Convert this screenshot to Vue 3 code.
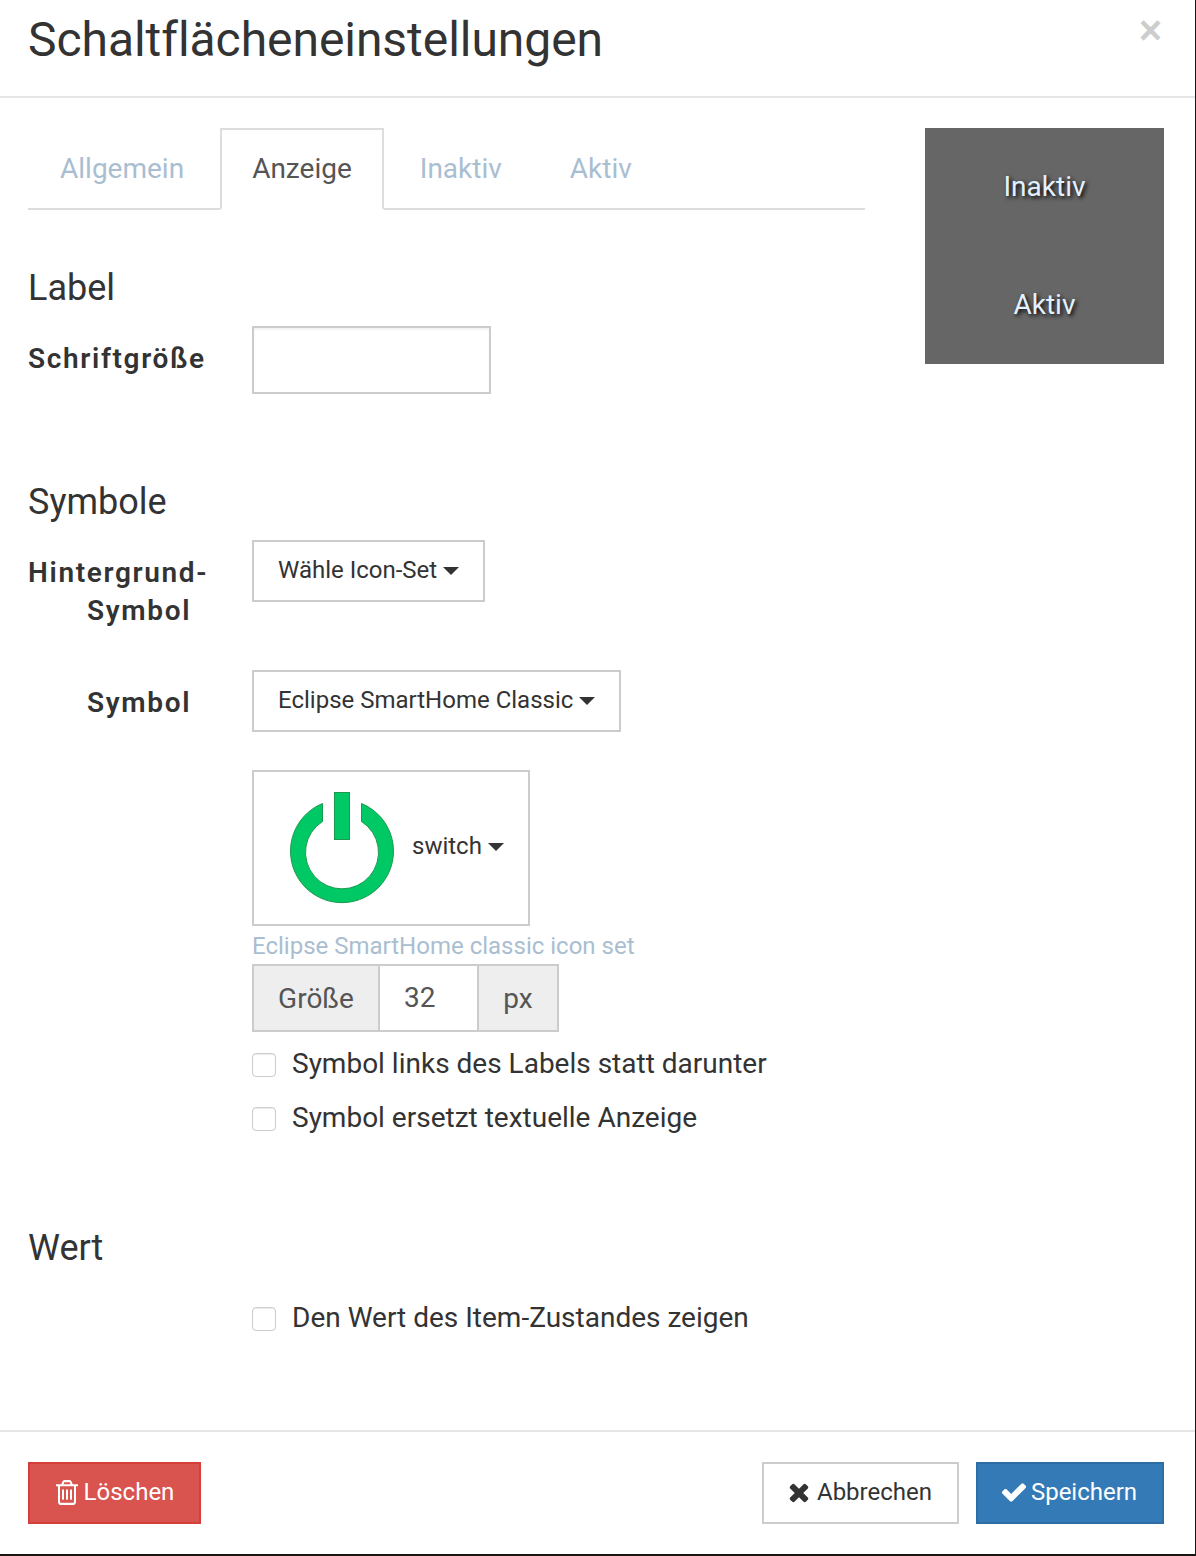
<script setup>
const tabs = [
  { label: 'Allgemein', active: false },
  { label: 'Anzeige', active: true },
  { label: 'Inaktiv', active: false },
  { label: 'Aktiv', active: false }
]
const trash = 'M704 736v576q0 14-9 23t-23 9h-64q-14 0-23-9t-9-23v-576q0-14 9-23t23-9h64q14 0 23 9t9 23zm256 0v576q0 14-9 23t-23 9h-64q-14 0-23-9t-9-23v-576q0-14 9-23t23-9h64q14 0 23 9t9 23zm256 0v576q0 14-9 23t-23 9h-64q-14 0-23-9t-9-23v-576q0-14 9-23t23-9h64q14 0 23 9t9 23zm128 724v-948h-896v948q0 22 7 40.5t14.5 27 10.5 8.5h832q3 0 10.5-8.5t14.5-27 7-40.5zm-672-1076h448l-48-117q-7-9-17-11h-317q-10 2-17 11zm928 32v64q0 14-9 23t-23 9h-96v948q0 83-47 143.5t-113 60.5h-832q-66 0-113-58.5t-47-141.5v-952h-96q-14 0-23-9t-9-23v-64q0-14 9-23t23-9h309l70-167q15-37 54-63t79-26h320q40 0 79 26t54 63l70 167h309q14 0 23 9t9 23z'
const times = 'M1490 1322q0 40-28 68l-136 136q-28 28-68 28t-68-28l-294-294-294 294q-28 28-68 28t-68-28l-136-136q-28-28-28-68t28-68l294-294-294-294q-28-28-28-68t28-68l136-136q28-28 68-28t68 28l294 294 294-294q28-28 68-28t68 28l136 136q28 28 28 68t-28 68l-294 294 294 294q28 28 28 68z'
const check = 'M1671 566q0 40-28 68l-724 724-136 136q-28 28-68 28t-68-28l-136-136-362-362q-28-28-28-68t28-68l136-136q28-28 68-28t68 28l294 295 656-657q28-28 68-28t68 28l136 136q28 28 28 68z'
</script>

<template>
  <div class="modal">
    <header class="head">
      <h1 class="title">Schaltflächeneinstellungen</h1>
      <span class="close">×</span>
    </header>

    <main class="body">
      <div class="left">
        <ul class="tabs">
          <li v-for="t in tabs" :key="t.label" class="tab" :class="{ active: t.active }">{{ t.label }}</li>
        </ul>

        <h2 class="sec sec-label">Label</h2>
        <div class="row row-font">
          <label class="lbl">Schriftgröße</label>
          <div class="field"><div class="input"></div></div>
        </div>

        <h2 class="sec sec-symbole">Symbole</h2>
        <div class="row row-bg">
          <label class="lbl lbl-two"><span>Hintergrund-</span><span class="ind">Symbol</span></label>
          <div class="field">
            <div class="btn-drop">Wähle Icon-Set <i class="caret"></i></div>
          </div>
        </div>
        <div class="row row-sym">
          <label class="lbl ind">Symbol</label>
          <div class="field">
            <div class="btn-drop">Eclipse SmartHome Classic <i class="caret"></i></div>
            <div class="icon-box">
              <svg class="power" width="112" height="112" viewBox="0 0 112 112">
                <path d="M36.5 11.5A51.5 51.5 0 1 0 75.5 11.5L75.5 29.5A36.5 36.5 0 1 1 36.5 29.5Z" fill="#00c864" stroke="#1a9a50" stroke-width="1"/>
                <rect x="48.5" y="0.5" width="15" height="47" fill="#00c864" stroke="#1a9a50" stroke-width="1"/>
              </svg>
              <span class="switch">switch <i class="caret"></i></span>
            </div>
            <div class="help">Eclipse SmartHome classic icon set</div>
            <div class="group">
              <span class="addon addon-l">Größe</span>
              <span class="gval">32</span>
              <span class="addon addon-r">px</span>
            </div>
            <div class="chk chk-1"><i class="box"></i><span>Symbol links des Labels statt darunter</span></div>
            <div class="chk chk-2"><i class="box"></i><span>Symbol ersetzt textuelle Anzeige</span></div>
          </div>
        </div>

        <h2 class="sec sec-wert">Wert</h2>
        <div class="row row-wert">
          <div class="lbl"></div>
          <div class="field">
            <div class="chk"><i class="box"></i><span>Den Wert des Item-Zustandes zeigen</span></div>
          </div>
        </div>
      </div>

      <aside class="preview">
        <div class="pv pv-1">Inaktiv</div>
        <div class="pv pv-2">Aktiv</div>
      </aside>
    </main>

    <footer class="foot">
      <button class="btn danger">
        <svg class="ico" viewBox="0 0 1792 1792" width="28" height="29" preserveAspectRatio="none"><path :d="trash" fill="currentColor"/></svg>
        <span>Löschen</span>
      </button>
      <div class="spacer"></div>
      <button class="btn plain">
        <svg class="ico" viewBox="0 0 1792 1792" width="28" height="28"><path :d="times" fill="currentColor"/></svg>
        <span>Abbrechen</span>
      </button>
      <button class="btn primary">
        <svg class="ico" viewBox="0 0 1792 1792" width="28" height="28"><path :d="check" fill="currentColor"/></svg>
        <span>Speichern</span>
      </button>
    </footer>
  </div>
</template>

<style>
html, body { margin: 0; background: #1a1510; }
</style>

<style scoped>
* { box-sizing: border-box; }
.modal {
  width: 1195px;
  height: 1554px;
  background: #fff;
  font-family: Roboto, "Liberation Sans", sans-serif;
  font-size: 28px;
  color: #333;
  display: flex;
  flex-direction: column;
}
.head {
  height: 98px;
  border-bottom: 2px solid #e5e5e5;
  padding: 0 33px 0 28px;
  display: flex;
  justify-content: space-between;
  align-items: flex-start;
}
.title {
  margin: 12px 0 0;
  font-size: 48px;
  line-height: 56px;
  font-weight: 400;
  letter-spacing: -0.05px;
  color: #333;
}
.close {
  font-family: "Liberation Sans", sans-serif;
  font-size: 40px;
  font-weight: 700;
  line-height: 42px;
  margin-top: 9px;
  color: #cdcdcd;
}
.body {
  flex: 1;
  padding: 30px 31px 0 28px;
  display: flex;
  align-items: flex-start;
  gap: 60px;
}
.left { width: 837px; }
.tabs {
  list-style: none;
  margin: 0;
  padding: 0;
  display: flex;
  height: 82px;
  border-bottom: 2px solid #ddd;
}
.tab {
  height: 82px;
  padding: 21px 30px 19px;
  margin-right: 4px;
  border: 2px solid transparent;
  line-height: 36px;
  color: #a9bed1;
}
.tab.active {
  border-color: #ddd;
  border-bottom-color: #fff;
  color: #555;
}
.sec {
  margin: 0;
  font-size: 36px;
  line-height: 40px;
  font-weight: 400;
  color: #333;
}
.sec-label { margin-top: 58px; }
.sec-symbole { margin-top: 88px; }
.sec-wert { margin-top: 91px; }
.row { display: flex; }
.lbl {
  width: 224px;
  flex: none;
  font-weight: 600;
  letter-spacing: 1.65px;
  line-height: 38px;
  color: #333;
  padding-top: 14px;
}
.lbl-two { display: flex; flex-direction: column; }
.ind { padding-left: 59px; }
.row-font { margin-top: 18px; }
.row-bg { margin-top: 18px; }
.row-sym { margin-top: 40px; }
.field { flex: 1; }
.input {
  width: 239px;
  height: 68px;
  border: 2px solid #ccc;
  box-shadow: inset 0 2px 2px rgba(0,0,0,.05);
}
.btn-drop {
  display: inline-flex;
  align-items: center;
  height: 62px;
  padding: 0 24px 2px;
  border: 2px solid #ccc;
  font-size: 24px;
  color: #333;
  white-space: pre;
}
.caret {
  display: inline-block;
  width: 0;
  height: 0;
  margin-top: 2px;
  border-left: 8px solid transparent;
  border-right: 8px solid transparent;
  border-top: 8px solid #333;
}
.icon-box {
  margin-top: 38px;
  width: 278px;
  height: 156px;
  border: 2px solid #ccc;
  padding: 20px 0 0 32px;
  display: flex;
  align-items: flex-start;
}
.power { flex: none; }
.switch { margin: 39px 0 0 14px; font-size: 24px; line-height: 30px; white-space: pre; display: inline-flex; align-items: center; }
.help {
  font-size: 24px;
  line-height: 40px;
  height: 38px;
  color: #a9bed1;
}
.group {
  display: flex;
  width: 307px;
  height: 68px;
  border: 2px solid #ccc;
  color: #555;
}
.addon {
  background: #eee;
  display: flex;
  align-items: center;
  justify-content: center;
  padding-top: 1px;
}
.addon-l { width: 126px; border-right: 2px solid #ccc; }
.gval { width: 97px; padding: 0 0 2px 24px; display: flex; align-items: center; }
.addon-r { flex: 1; border-left: 2px solid #ccc; }
.chk { display: flex; align-items: center; height: 36px; white-space: nowrap; color: #333; }
.chk span { line-height: 34px; height: 36px; }
.chk-1 { margin-top: 15px; }
.chk-2 { margin-top: 18px; }
.box {
  width: 24px;
  height: 24px;
  border: 1px solid #ccc;
  border-radius: 4px;
  margin-right: 16px;
  flex: none;
  box-shadow: inset 0 1px 1px rgba(0,0,0,.08);
}
.row-wert { margin-top: 33px; }
.preview {
  width: 239px;
  height: 236px;
  flex: none;
  background: #666;
  color: #e3f1ff;
  text-shadow: 2px 2px 4px #000;
  text-align: center;
  padding-top: 41px;
}
.pv { height: 36px; line-height: 36px; }
.pv-2 { margin-top: 82px; }
.foot {
  height: 124px;
  border-top: 2px solid #e5e5e5;
  padding: 30px 31px 0 28px;
  display: flex;
  align-items: flex-start;
}
.spacer { flex: 1; }
.btn {
  height: 62px;
  font: inherit;
  font-size: 24px;
  border: 2px solid;
  padding: 0 0 2px;
  display: inline-flex;
  align-items: center;
  justify-content: center;
  gap: 3px;
}
.danger { width: 173px; padding-right: 2px; background: #d9534f; border-color: #d43f3a; color: #fff; }
.plain { width: 197px; padding-right: 4px; gap: 4px; background: #fff; border-color: #ccc; color: #333; }
.primary { width: 188px; padding-right: 3px; margin-left: 17px; background: #337ab7; border-color: #2e6da4; color: #fff; }
.ico { flex: none; }
</style>
